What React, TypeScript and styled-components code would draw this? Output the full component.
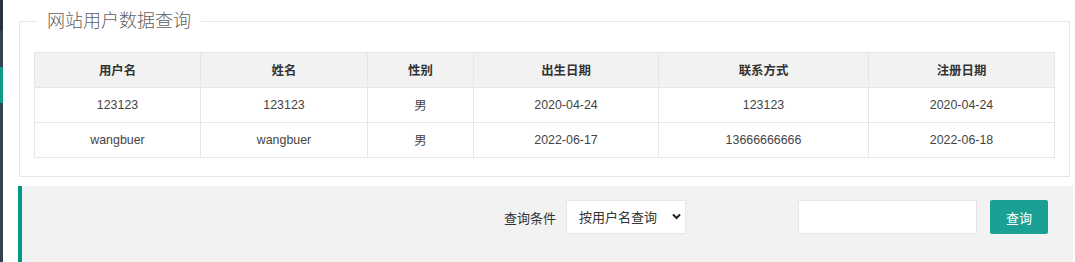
import styled, { createGlobalStyle } from "styled-components";

const GlobalStyle = createGlobalStyle`
  html, body {
    margin: 0;
    padding: 0;
    background: #fff;
    font-family: "Liberation Sans", "Noto Sans CJK SC", sans-serif;
    color: #333;
  }
`;

const Page = styled.div`
  display: flex;
  width: 1075px;
  height: 262px;
  overflow: hidden;
`;

const SideEdge = styled.div`
  width: 3px;
  flex-shrink: 0;
  background: linear-gradient(
    to bottom,
    #28323f 0,
    #28323f 30px,
    #34434f 30px,
    #34434f 67px,
    #0f9a8a 67px,
    #0f9a8a 103px,
    #34434f 103px
  );
`;

const Main = styled.div`
  flex: 1;
  padding: 0 4px 0 15px;
  display: flex;
  flex-direction: column;
`;

const FieldBox = styled.fieldset`
  margin: 9px 3px 0 1px;
  padding: 19px 14px 18px;
  border: 1px solid #e6e6e6;
  min-width: 0;
`;

const Legend = styled.legend`
  margin-left: 3px;
  padding: 0 10px;
  font-size: 18px;
  line-height: 24px;
  font-weight: 300;
  color: #5f5f5f;
`;

const Table = styled.table`
  width: 100%;
  border-collapse: collapse;
  table-layout: fixed;
  font-size: 12.4px;
`;

const HeadCell = styled.th`
  height: 34px;
  padding: 0;
  background: #f2f2f2;
  border: 1px solid #e6e6e6;
  font-weight: bold;
  color: #333;
  text-align: center;
`;

const Cell = styled.td`
  height: 34px;
  padding: 0;
  border: 1px solid #e6e6e6;
  color: #444;
  text-align: center;
`;

const SearchPanel = styled.div`
  margin-top: 9px;
  height: 90px;
  background: #f2f2f2;
  border-left: 4px solid #009688;
  display: flex;
  justify-content: flex-end;
  align-items: flex-start;
  padding: 14px 25px 0 0;
`;

const Group = styled.div<{ $gap: number }>`
  display: flex;
  align-items: center;
  gap: ${(p) => p.$gap}px;
`;

const Label = styled.span`
  font-size: 13px;
  color: #333;
`;

const SelectWrap = styled.div`
  position: relative;
  width: 120px;
  height: 34px;
  margin-right: 112px;
`;

const Select = styled.select`
  appearance: none;
  width: 100%;
  height: 100%;
  box-sizing: border-box;
  padding: 0 0 0 12px;
  border: 1px solid #e6e6e6;
  background: #fff;
  font-family: inherit;
  font-size: 13px;
  color: #333;
  outline: none;
`;

const Chevron = styled.svg`
  position: absolute;
  right: 5px;
  top: 13px;
  pointer-events: none;
`;

const Input = styled.input`
  width: 179px;
  height: 34px;
  box-sizing: border-box;
  border: 1px solid #e6e6e6;
  background: #fff;
  outline: none;
`;

const Button = styled.button`
  width: 58px;
  height: 34px;
  border: none;
  border-radius: 2px;
  background: #1aa094;
  color: #fff;
  font-family: inherit;
  font-size: 13px;
  cursor: pointer;
`;

const columns = [
  { title: "用户名", width: 166 },
  { title: "姓名", width: 167 },
  { title: "性别", width: 106 },
  { title: "出生日期", width: 185 },
  { title: "联系方式", width: 210 },
  { title: "注册日期", width: 186 },
];

const users = [
  ["123123", "123123", "男", "2020-04-24", "123123", "2020-04-24"],
  ["wangbuer", "wangbuer", "男", "2022-06-17", "13666666666", "2022-06-18"],
];

const App = () => {
  return (
    <>
      <GlobalStyle />
      <Page>
        <SideEdge />
        <Main>
          <FieldBox>
            <Legend>网站用户数据查询</Legend>
            <Table>
              <colgroup>
                {columns.map((c) => (
                  <col key={c.title} style={{ width: c.width }} />
                ))}
              </colgroup>
              <thead>
                <tr>
                  {columns.map((c) => (
                    <HeadCell key={c.title}>{c.title}</HeadCell>
                  ))}
                </tr>
              </thead>
              <tbody>
                {users.map((row, i) => (
                  <tr key={i}>
                    {row.map((v, j) => (
                      <Cell key={j}>{v}</Cell>
                    ))}
                  </tr>
                ))}
              </tbody>
            </Table>
          </FieldBox>
          <SearchPanel>
            <Group $gap={10}>
              <Label>查询条件</Label>
              <SelectWrap>
                <Select defaultValue="username">
                  <option value="username">按用户名查询</option>
                  <option value="name">按姓名查询</option>
                </Select>
                <Chevron width="9" height="7" viewBox="0 0 9 7">
                  <path
                    d="M1 1.5 L4.5 5 L8 1.5"
                    fill="none"
                    stroke="#222"
                    strokeWidth="2"
                  />
                </Chevron>
              </SelectWrap>
            </Group>
            <Group $gap={13}>
              <Input type="text" />
              <Button>查询</Button>
            </Group>
          </SearchPanel>
        </Main>
      </Page>
    </>
  );
};

export default App;
